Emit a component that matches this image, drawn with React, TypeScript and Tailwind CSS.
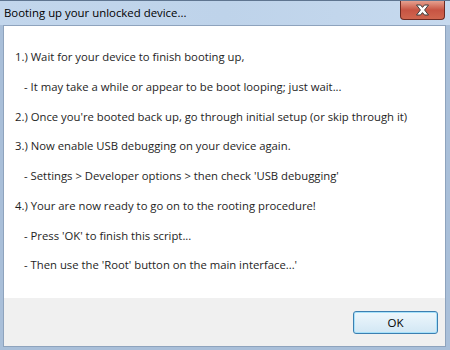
import React from "react";

const LINES: { text: string; sub: boolean }[] = [
    { text: "1.) Wait for your device to finish booting up,", sub: false },
    { text: "- It may take a while or appear to be boot looping; just wait...", sub: true },
    { text: "2.) Once you're booted back up, go through initial setup (or skip through it)", sub: false },
    { text: "3.) Now enable USB debugging on your device again.", sub: false },
    { text: "- Settings > Developer options > then check 'USB debugging'", sub: true },
    { text: "4.) Your are now ready to go on to the rooting procedure!", sub: false },
    { text: "- Press 'OK' to finish this script...", sub: true },
    { text: "- Then use the 'Root' button on the main interface...'", sub: true },
];

export default function App() {
    return (
        <div
            className="w-[450px] h-[350px] overflow-hidden bg-[#a9bfd9] flex flex-col text-[11.3px] text-[#1e1e1e]"
            style={{ fontFamily: "'Open Sans', 'Noto Sans', sans-serif" }}
        >
            {/* TITLE BAR */}
            <div className="h-[25px] flex items-start justify-between bg-gradient-to-r from-[#c2d6ec] via-[#bed3ea] to-[#c6d9ee] border-t border-[#5f7590]">
                <span className="pl-[4px] pt-[4px] text-[11.4px] text-black leading-[16px]">
                    Booting up your unlocked device...
                </span>
                <CloseButton />
            </div>

            {/* BODY */}
            <div className="flex-1 flex flex-col mx-[3px] mr-[4px] mb-[3px] border border-[#8ea3bd] bg-white">
                <div className="h-[272px] flex flex-col pt-[17px] pl-[11px]">
                    {LINES.map((l, i) => (
                        <div
                            key={i}
                            className={`h-[29.7px] flex items-center whitespace-nowrap ${l.sub ? "pl-[9px]" : ""}`}
                        >
                            {l.text}
                        </div>
                    ))}
                </div>

                {/* FOOTER */}
                <div className="flex-1 bg-[#f0f0f0] flex items-center justify-end pr-[7px] pt-[1px]">
                    <button className="w-[85px] h-[23px] rounded-[3px] border border-[#3c7fb1] shadow-[inset_0_0_0_1px_#a7e1fa] bg-gradient-to-b from-[#eef7fc] to-[#d2e7f4] text-[11.5px] text-black leading-none">
                        OK
                    </button>
                </div>
            </div>
        </div>
    );
}

function CloseButton() {
    return (
        <div className="mr-[5px] w-[45px] h-[19px] rounded-b-[4px] border border-t-0 border-[#6d2a22] bg-gradient-to-b from-[#e5a08f] via-[#c75443] to-[#d0664f] flex items-center justify-center">
            <svg width="15" height="12" viewBox="0 0 15 12">
                <path
                    d="M1.5 1 L5.5 1 L7.5 3.4 L9.5 1 L13.5 1 L9.6 6 L13.5 11 L9.5 11 L7.5 8.6 L5.5 11 L1.5 11 L5.4 6 Z"
                    fill="#ffffff"
                    stroke="#3d3d3d"
                    strokeWidth="1"
                    strokeLinejoin="round"
                />
            </svg>
        </div>
    );
}
